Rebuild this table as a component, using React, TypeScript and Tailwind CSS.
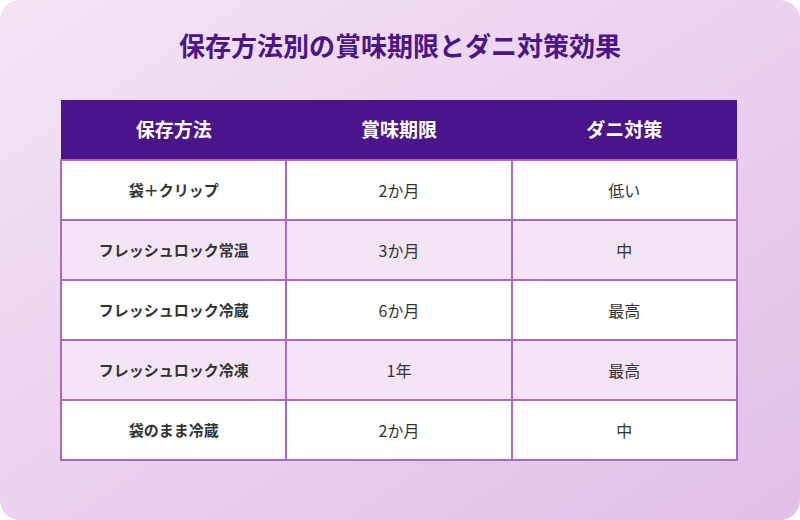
const rows = [
  { method: "袋＋クリップ", shelf: "2か月", mite: "低い" },
  { method: "フレッシュロック常温", shelf: "3か月", mite: "中" },
  { method: "フレッシュロック冷蔵", shelf: "6か月", mite: "最高" },
  { method: "フレッシュロック冷凍", shelf: "1年", mite: "最高" },
  { method: "袋のまま冷蔵", shelf: "2か月", mite: "中" },
]

const font = { fontFamily: '"Noto Sans CJK JP", "Noto Sans", sans-serif' }

export default function App() {
  return (
    <div className="w-[800px] h-[520px] bg-white" style={font}>
      <div className="w-full h-full rounded-[20px] bg-gradient-to-br from-[#f3e4f4] to-[#e2bfe8] pt-[25px]">
        {/* Title */}
        <h1 className="text-center text-[26px] font-bold leading-[40px] text-[#4a148c]">
          保存方法別の賞味期限とダニ対策効果
        </h1>

        {/* Table */}
        <table className="mt-[35px] ml-[60px] w-[678px] border-collapse table-fixed">
          <thead>
            <tr className="bg-[#4a148c] h-[60px]">
              <th className="text-white text-[19px] font-bold">保存方法</th>
              <th className="text-white text-[19px] font-bold">賞味期限</th>
              <th className="text-white text-[19px] font-bold">ダニ対策</th>
            </tr>
          </thead>
          <tbody>
            {rows.map((r, i) => (
              <tr key={i} className={i % 2 === 1 ? "bg-[#f3e4f6] h-[60px]" : "bg-white h-[60px]"}>
                <td className="border-2 border-[#ad66cc] text-center text-[15px] font-bold text-[#333]">
                  {r.method}
                </td>
                <td className="border-2 border-[#ad66cc] text-center text-[16px] text-[#333]">
                  {r.shelf}
                </td>
                <td className="border-2 border-[#ad66cc] text-center text-[16px] text-[#333]">
                  {r.mite}
                </td>
              </tr>
            ))}
          </tbody>
        </table>
      </div>
    </div>
  )
}
